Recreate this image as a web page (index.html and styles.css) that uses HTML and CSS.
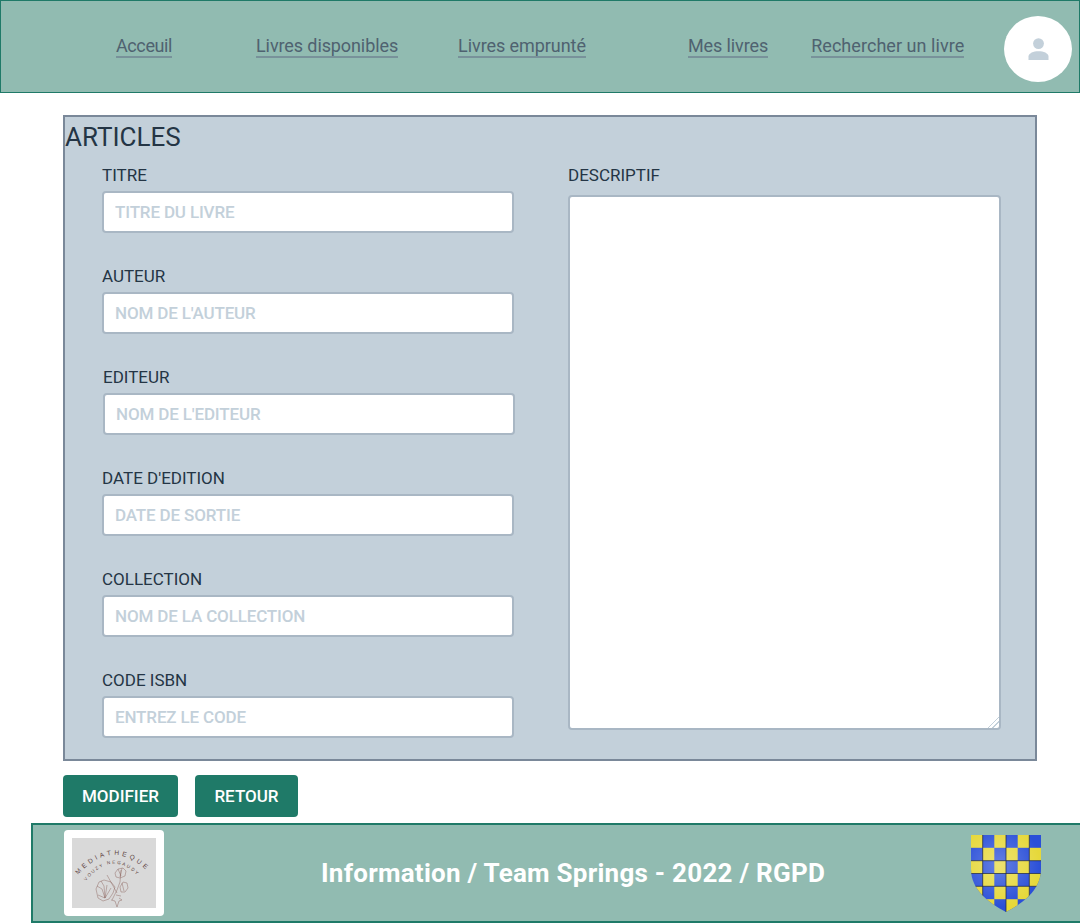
FILE: index.html
```html
<!DOCTYPE html>
<html>

<head>
  <title>Articles</title>
  <link rel="stylesheet" href="styles.css">
</head>

<body>
  <header class="topbar">
    <nav class="nav">
      <a class="nav-link nav-home" href="#">Acceuil</a>
      <a class="nav-link nav-dispo" href="#">Livres disponibles</a>
      <a class="nav-link nav-emprunt" href="#">Livres emprunté</a>
      <a class="nav-link nav-mes" href="#">Mes livres</a>
      <a class="nav-link nav-search" href="#">Rechercher un livre</a>
    </nav>
    <div class="avatar">
      <svg width="21" height="22" viewBox="0 0 21 22">
        <circle cx="10.5" cy="5.6" r="5.4" fill="#c3d0da" />
        <path d="M0.5 22v-3.5c0-3.4 5-5.3 10-5.3s10 1.9 10 5.3V22z" fill="#c3d0da" />
      </svg>
    </div>
  </header>

  <main class="panel">
    <h1 class="panel-title">ARTICLES</h1>
    <div class="panel-body">
      <div class="fields">
        <div class="field">
          <label for="titre">TITRE</label>
          <input type="text" id="titre" placeholder="TITRE DU LIVRE" />
        </div>
        <div class="field">
          <label for="auteur">AUTEUR</label>
          <input type="text" id="auteur" placeholder="NOM DE L'AUTEUR" />
        </div>
        <div class="field field-shift">
          <label for="editeur">EDITEUR</label>
          <input type="text" id="editeur" placeholder="NOM DE L'EDITEUR" />
        </div>
        <div class="field">
          <label for="date">DATE D'EDITION</label>
          <input type="text" id="date" placeholder="DATE DE SORTIE" />
        </div>
        <div class="field">
          <label for="collection">COLLECTION</label>
          <input type="text" id="collection" placeholder="NOM DE LA COLLECTION" />
        </div>
        <div class="field">
          <label for="isbn">CODE ISBN</label>
          <input type="text" id="isbn" placeholder="ENTREZ LE CODE" />
        </div>
      </div>
      <div class="descriptif">
        <label for="descriptif">DESCRIPTIF</label>
        <textarea id="descriptif"></textarea>
      </div>
    </div>
  </main>

  <div class="actions">
    <button class="btn btn-modifier">MODIFIER</button>
    <button class="btn btn-retour">RETOUR</button>
  </div>

  <footer class="footer">
    <div class="logo">
      <svg width="84" height="70" viewBox="0 0 84 70">
        <defs>
          <path id="arc1" d="M6 37 Q40 -1 75 33" />
          <path id="arc2" d="M14 43 Q40 10 68 40" />
        </defs>
        <text class="logo-text">
          <textPath href="#arc1" textLength="78">MEDIATHEQUE</textPath>
          <textPath class="logo-small" href="#arc2" textLength="60">VOUZY NEGAUDY</textPath>
        </text>
        <g fill="none" stroke="#8a625c" stroke-width="0.45">
          <path d="M24 51l3-7 5-2 7 2 4 5-2 6-4 6-6 2-5-3z" />
          <path d="M33 60l-3-9-5-3M33 60l-1-12-3-5M33 60l2-13M33 60l6-10M33 60l-7-3" />
          <path d="M35 37l10 18M40 62l5-10 3-8 1-12" />
          <path d="M43 35l3-4 5-1 3 3-1 5-5 2-4-1zM46 31l3 7M50 30l-2 9" />
          <path d="M48 49l3-5 4 1 1 5-3 4-4 0zM50 45l2 8" />
          <path d="M39 62l4 1 2 6 2-6 3-1-3-2M44 57l5 1" />
        </g>
      </svg>
    </div>
    <div class="footer-text">Information / Team Springs - 2022 / RGPD</div>
    <svg class="shield" width="70" height="77" viewBox="0 0 70 77">
      <defs>
        <clipPath id="shield-shape">
          <path d="M0 0H70V34C70 55 52 68 35 77 18 68 0 55 0 34Z" />
        </clipPath>
        <radialGradient id="shine" gradientUnits="userSpaceOnUse" cx="28" cy="30" r="42">
          <stop offset="0" stop-color="#fff" stop-opacity="0.28" />
          <stop offset="1" stop-color="#fff" stop-opacity="0" />
        </radialGradient>
      </defs>
      <g clip-path="url(#shield-shape)">
        <rect width="70" height="77" fill="#2a4fd8" />
        <g fill="#e6d83a">
          <rect x="0" y="0" width="11.7" height="12.8" />
          <rect x="23.3" y="0" width="11.7" height="12.8" />
          <rect x="46.7" y="0" width="11.7" height="12.8" />
          <rect x="11.7" y="12.8" width="11.6" height="12.9" />
          <rect x="35" y="12.8" width="11.7" height="12.9" />
          <rect x="58.3" y="12.8" width="11.7" height="12.9" />
          <rect x="0" y="25.7" width="11.7" height="12.8" />
          <rect x="23.3" y="25.7" width="11.7" height="12.8" />
          <rect x="46.7" y="25.7" width="11.7" height="12.8" />
          <rect x="11.7" y="38.5" width="11.6" height="12.8" />
          <rect x="35" y="38.5" width="11.7" height="12.8" />
          <rect x="58.3" y="38.5" width="11.7" height="12.8" />
          <rect x="0" y="51.3" width="11.7" height="12.9" />
          <rect x="23.3" y="51.3" width="11.7" height="12.9" />
          <rect x="46.7" y="51.3" width="11.7" height="12.9" />
          <rect x="11.7" y="64.2" width="11.6" height="12.8" />
          <rect x="35" y="64.2" width="11.7" height="12.8" />
        </g>
        <rect width="70" height="77" fill="url(#shine)" />
        <g stroke="#1a2340" stroke-width="0.7" fill="none">
          <path d="M11.7 0V77M35 0V77M58.3 0V77" />
          <path d="M0 25.7H70M0 38.5H70M0 51.3H70" />
        </g>
      </g>
    </svg>
  </footer>
</body>

</html>
```

FILE: styles.css
```css
html {
  overflow: hidden;
}

body {
  margin: 0;
  font-family: Roboto, "Noto Sans", sans-serif;
  background: #fff;
  color: #243545;
}

.topbar {
  display: flex;
  align-items: center;
  height: 93px;
  box-sizing: border-box;
  border: 1px solid #1f7a68;
  background: #91bbb1;
}

.nav {
  display: flex;
  align-items: center;
  padding-left: 115px;
}

.nav-link {
  display: block;
  font-size: 18px;
  line-height: 20px;
  color: #4f6270;
  text-decoration: none;
  border-bottom: 2px solid #78929a;
}

.nav-home {
  letter-spacing: -0.4px;
}

.nav-dispo {
  margin-left: 84px;
  letter-spacing: -0.1px;
}

.nav-emprunt {
  margin-left: 60px;
  letter-spacing: -0.07px;
}

.nav-mes {
  margin-left: 102px;
  letter-spacing: -0.1px;
}

.nav-search {
  margin-left: 43px;
  letter-spacing: 0.05px;
}

.avatar {
  display: flex;
  align-items: center;
  justify-content: center;
  width: 68px;
  height: 66px;
  margin-left: 40px;
  margin-top: 5px;
  border-radius: 50%;
  background: #fff;
}

.panel {
  margin: 22px 43px 0 63px;
  height: 646px;
  box-sizing: border-box;
  border: 2px solid #7a8899;
  background: #c3d0da;
}

.panel-title {
  margin: 0;
  font-size: 26px;
  font-weight: 400;
  line-height: 40px;
  height: 47px;
}

.panel-body {
  display: flex;
  padding-left: 37px;
}

.fields {
  width: 412px;
}

.field {
  height: 101px;
}

.field-shift {
  margin-left: 1px;
}

label {
  display: block;
  height: 27px;
  font-size: 17px;
  line-height: 22px;
}

input[type="text"] {
  display: block;
  width: 412px;
  height: 42px;
  padding: 0 11px;
  box-sizing: border-box;
  border: 2px solid #a9b7c4;
  border-radius: 4px;
  background: #fff;
  font-family: inherit;
  font-size: 17px;
  font-weight: 500;
  letter-spacing: -0.15px;
  color: #243545;
}

input::placeholder {
  color: #c3d0da;
  opacity: 1;
}

.descriptif {
  width: 433px;
  margin-left: 54px;
}

.descriptif label {
  height: 31px;
}

textarea {
  display: block;
  width: 100%;
  height: 535px;
  box-sizing: border-box;
  border: 2px solid #a9b7c4;
  border-radius: 4px;
  background: #fff;
}

textarea::-webkit-resizer {
  background: linear-gradient(135deg, transparent 60%, #c3d0da 60%, #c3d0da 65%, transparent 65%, transparent 76%, #c3d0da 76%, #c3d0da 81%, transparent 81%);
}

.actions {
  display: flex;
  gap: 17px;
  margin: 14px 0 0 63px;
}

.btn {
  height: 42px;
  padding: 0;
  border: none;
  border-radius: 4px;
  background: #1f7a68;
  color: #fff;
  font-family: inherit;
  font-size: 17px;
  font-weight: 500;
}

.btn-modifier {
  width: 115px;
}

.btn-retour {
  width: 103px;
}

.footer {
  display: flex;
  align-items: center;
  width: 1052px;
  height: 100px;
  margin: 6px 0 0 31px;
  box-sizing: border-box;
  border: 2px solid #1f7a68;
  background: #91bbb1;
}

.logo {
  display: flex;
  align-items: center;
  justify-content: center;
  width: 100px;
  height: 86px;
  margin-left: 31px;
  border-radius: 4px;
  background: #fff;
}

.logo svg {
  background: #d9d9d9;
}

.logo-text {
  font-family: "Liberation Sans", sans-serif;
  font-size: 6.5px;
  fill: #5f4644;
}

.logo-small {
  font-size: 4.5px;
}

.footer-text {
  width: 504px;
  margin-left: 157px;
  font-size: 26px;
  font-weight: 700;
  letter-spacing: 0.25px;
  white-space: nowrap;
  color: #fff;
}

.shield {
  margin-left: 146px;
}
```
